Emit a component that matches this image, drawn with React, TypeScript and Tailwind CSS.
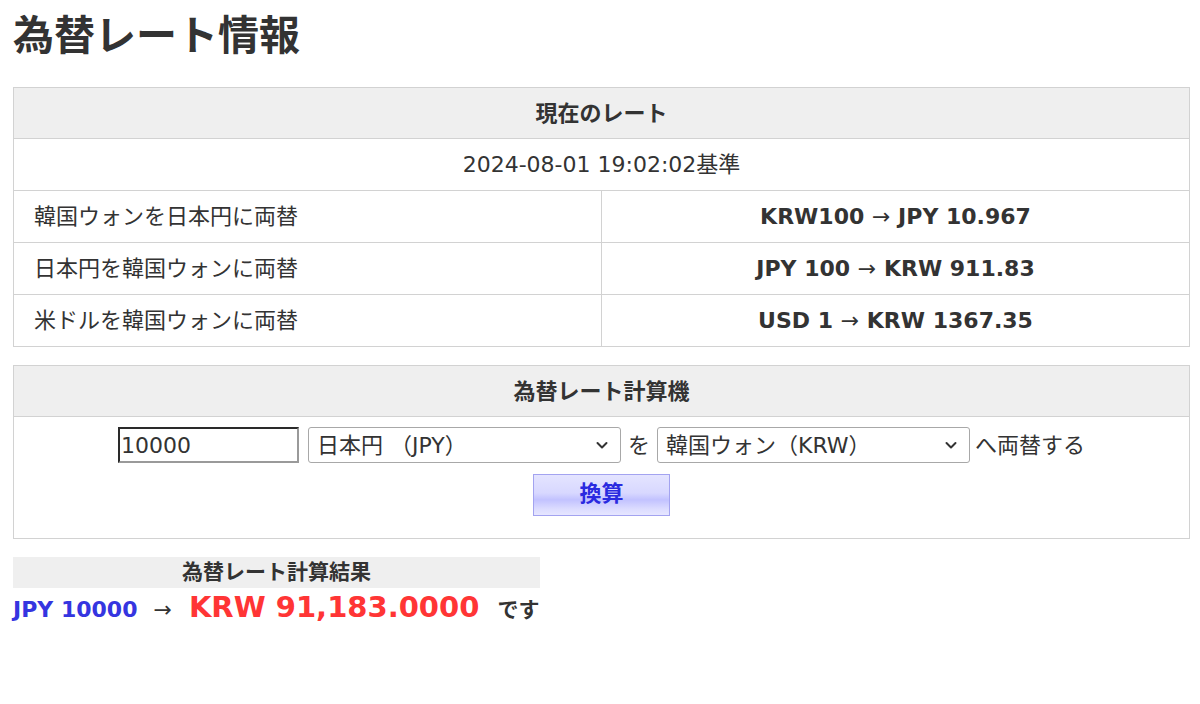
import { useState } from 'react';

const font = { fontFamily: '"DejaVu Sans", "Noto Sans CJK JP", sans-serif' };

const rates = [
  { label: '韓国ウォンを日本円に両替', from: 'KRW100', to: 'JPY 10.967' },
  { label: '日本円を韓国ウォンに両替', from: 'JPY 100', to: 'KRW 911.83' },
  { label: '米ドルを韓国ウォンに両替', from: 'USD 1', to: 'KRW 1367.35' },
];

function Chevron() {
  return (
    <svg
      className="pointer-events-none absolute right-[12px] top-1/2 -translate-y-1/2"
      width="14"
      height="14"
      viewBox="0 0 14 14"
      fill="none"
      stroke="#333"
      strokeWidth="2"
      strokeLinecap="round"
      strokeLinejoin="round"
    >
      <path d="M2.5 5l4.5 4.5L11.5 5" />
    </svg>
  );
}

function Select({ value, options }: { value: string; options: string[] }) {
  return (
    <div className="relative w-[313px]">
      <select
        defaultValue={value}
        className="h-[36px] w-full appearance-none rounded-[3px] border border-[#a8a8a8] bg-white pl-[8px] text-[22px] text-[#333] outline-none"
        style={font}
      >
        {options.map((o) => (
          <option key={o}>{o}</option>
        ))}
      </select>
      <Chevron />
    </div>
  );
}

export default function App() {
  const [amount, setAmount] = useState('10000');
  const currencies = ['日本円 （JPY）', '韓国ウォン（KRW）', '米ドル（USD）'];

  return (
    <div className="min-h-screen bg-white pl-[13px] pr-[10px] pt-[11px] text-[#333]" style={font}>
      <h1 className="text-[41px] font-bold leading-[50px] text-[#333]">為替レート情報</h1>

      {/* 現在のレート */}
      <table className="mt-[26px] w-full border-collapse text-[22px]">
        <thead>
          <tr className="h-[51px]">
            <th colSpan={2} className="border border-[#d2d2d2] bg-[#efefef] font-bold">
              現在のレート
            </th>
          </tr>
        </thead>
        <tbody>
          <tr className="h-[52px]">
            <td colSpan={2} className="border border-[#d2d2d2] text-center">
              2024-08-01 19:02:02基準
            </td>
          </tr>
          {rates.map((r) => (
            <tr key={r.label} className="h-[52px]">
              <td className="w-1/2 border border-[#d2d2d2] pl-[20px]">{r.label}</td>
              <td className="w-1/2 border border-[#d2d2d2] text-center font-bold">
                {r.from} <span className="font-normal">→</span> {r.to}
              </td>
            </tr>
          ))}
        </tbody>
      </table>

      {/* 為替レート計算機 */}
      <div className="mt-[18px] border border-[#d2d2d2]">
        <div className="flex h-[51px] items-center justify-center border-b border-[#d2d2d2] bg-[#efefef] text-[22px] font-bold">
          為替レート計算機
        </div>
        <div className="flex flex-col items-center pb-[22px] pt-[10px]">
          <div className="flex items-center gap-[7px] text-[22px]">
            <input
              value={amount}
              onChange={(e) => setAmount(e.target.value)}
              className="mr-[2px] h-[36px] w-[181px] border-2 border-b-[#9a9a9a] border-l-[#2a2a2a] border-r-[#9a9a9a] border-t-[#2a2a2a] bg-white px-[1px] text-[22px] text-[#333] outline-none"
              style={font}
            />
            <Select value="日本円 （JPY）" options={currencies} />
            <span>を</span>
            <Select value="韓国ウォン（KRW）" options={currencies} />
            <span className="-ml-[2px]">へ両替する</span>
          </div>
          <button
            className="mt-[11px] h-[42px] w-[137px] border border-[#a3a3f0] bg-[linear-gradient(to_bottom,#e4e4ff_0%,#d8d8ff_45%,#c2c2ff_62%,#dcdcff_85%,#e6e6ff_100%)] pb-[4px] text-[22px] font-bold text-[#2a2ae0]"
            style={font}
          >
            換算
          </button>
        </div>
      </div>

      {/* 計算結果 */}
      <div className="mt-[18px] w-[527px]">
        <div className="flex h-[31px] items-center justify-center bg-[#efefef] text-[21px] font-bold">
          為替レート計算結果
        </div>
        <div className="-mt-[2px] flex items-baseline font-bold">
          <span className="text-[22px] text-[#3535e0]">JPY 10000</span>
          <span className="ml-[16px] text-[22px] font-normal text-[#333]">→</span>
          <span className="ml-[17px] text-[29px] text-[#ff3535]">KRW 91,183.0000</span>
          <span className="ml-[18px] text-[21px] text-[#333]">です</span>
        </div>
      </div>
    </div>
  );
}
